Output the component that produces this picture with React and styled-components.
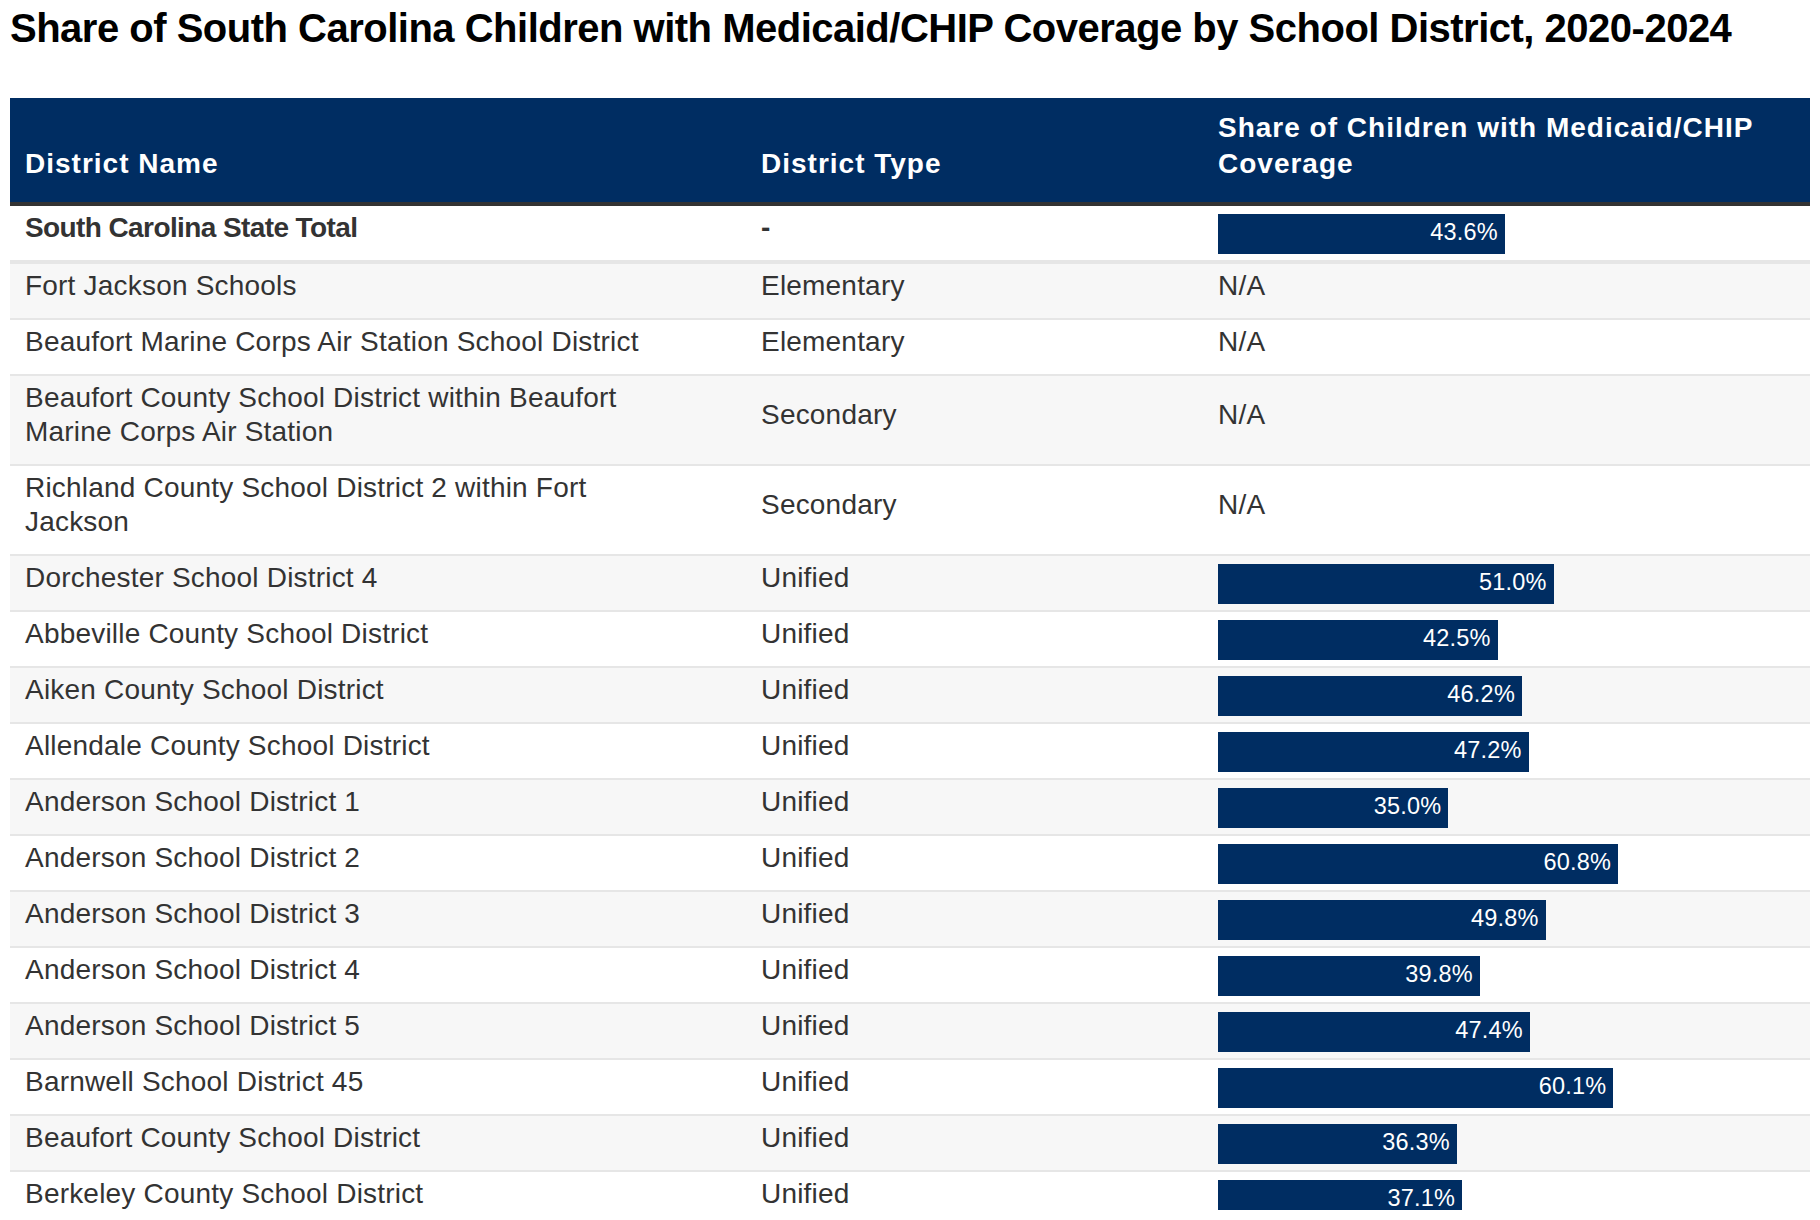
import styled, { createGlobalStyle } from 'styled-components';

const NAVY = '#002d62';
// bar length per percentage point, taken from the chart scale
const PX_PER_POINT = 6.58;

const GlobalStyle = createGlobalStyle`
  html, body {
    margin: 0;
    padding: 0;
    background: #fff;
  }
  body {
    font-family: "Liberation Sans", Arial, Helvetica, sans-serif;
    color: #333;
  }
`;

const districts = [
  { name: 'South Carolina State Total', type: '-', share: 43.6, total: true },
  { name: 'Fort Jackson Schools', type: 'Elementary', share: null },
  { name: 'Beaufort Marine Corps Air Station School District', type: 'Elementary', share: null },
  { name: 'Beaufort County School District within Beaufort Marine Corps Air Station', type: 'Secondary', share: null },
  { name: 'Richland County School District 2 within Fort Jackson', type: 'Secondary', share: null },
  { name: 'Dorchester School District 4', type: 'Unified', share: 51.0 },
  { name: 'Abbeville County School District', type: 'Unified', share: 42.5 },
  { name: 'Aiken County School District', type: 'Unified', share: 46.2 },
  { name: 'Allendale County School District', type: 'Unified', share: 47.2 },
  { name: 'Anderson School District 1', type: 'Unified', share: 35.0 },
  { name: 'Anderson School District 2', type: 'Unified', share: 60.8 },
  { name: 'Anderson School District 3', type: 'Unified', share: 49.8 },
  { name: 'Anderson School District 4', type: 'Unified', share: 39.8 },
  { name: 'Anderson School District 5', type: 'Unified', share: 47.4 },
  { name: 'Barnwell School District 45', type: 'Unified', share: 60.1 },
  { name: 'Beaufort County School District', type: 'Unified', share: 36.3 },
  { name: 'Berkeley County School District', type: 'Unified', share: 37.1 },
];

const Page = styled.main`
  padding: 4px 10px 0;
`;

const Title = styled.h1`
  margin: 0 0 46px;
  font-size: 40px;
  line-height: 48px;
  font-weight: 700;
  letter-spacing: -0.5px;
  color: #000;
`;

const TableClip = styled.div`
  height: 1112px;
  overflow: hidden;
`;

const Table = styled.table`
  width: 100%;
  table-layout: fixed;
  border-collapse: separate;
  border-spacing: 0;
`;

const Col = styled.col`
  width: ${p => p.$width || 'auto'};
`;

const HeadCell = styled.th`
  background: ${NAVY};
  color: #fff;
  text-align: left;
  vertical-align: bottom;
  padding: 12px 15px 20px;
  font-size: 28px;
  line-height: 36px;
  font-weight: 700;
  letter-spacing: 1px;
  border-bottom: 4px solid #333;
`;

const Row = styled.tr`
  background: ${p => (p.$shaded ? '#f7f7f7' : '#fff')};
`;

const Cell = styled.td`
  padding: ${p => (p.$bar ? '8px 15px 0' : '5px 15px 15px')};
  padding-right: ${p => (p.$wrapNarrow ? '81px' : '15px')};
  vertical-align: ${p => (p.$bar ? 'top' : 'middle')};
  font-size: 28px;
  line-height: 34px;
  letter-spacing: ${p => (p.$strong ? '-0.6px' : '0.2px')};
  font-weight: ${p => (p.$strong ? 700 : 400)};
  color: #333;
  border-bottom: ${p => (p.$thick ? '4px' : '2px')} solid #e6e6e6;
`;

const Bar = styled.div`
  box-sizing: border-box;
  height: 40px;
  padding-right: 7px;
  background: ${NAVY};
  color: #fff;
  font-size: 23.5px;
  line-height: 37px;
  text-align: right;
  white-space: nowrap;
`;

function ShareCell({ share, thick }) {
  if (share == null) {
    return <Cell $thick={thick}>N/A</Cell>;
  }
  return (
    <Cell $bar $thick={thick}>
      <Bar style={{ width: share * PX_PER_POINT }}>{share.toFixed(1)}%</Bar>
    </Cell>
  );
}

export default function App() {
  return (
    <Page>
      <GlobalStyle />
      <Title>Share of South Carolina Children with Medicaid/CHIP Coverage by School District, 2020-2024</Title>
      <TableClip>
        <Table>
          <colgroup>
            <Col $width="736px" />
            <Col $width="457px" />
            <Col />
          </colgroup>
          <thead>
            <tr>
              <HeadCell>District Name</HeadCell>
              <HeadCell>District Type</HeadCell>
              <HeadCell>Share of Children with Medicaid/CHIP Coverage</HeadCell>
            </tr>
          </thead>
          <tbody>
            {districts.map((d, i) => (
              <Row key={d.name} $shaded={i % 2 === 1}>
                <Cell $wrapNarrow $strong={d.total} $thick={d.total}>{d.name}</Cell>
                <Cell $strong={d.total} $thick={d.total}>{d.type}</Cell>
                <ShareCell share={d.share} thick={d.total} />
              </Row>
            ))}
          </tbody>
        </Table>
      </TableClip>
    </Page>
  );
}
